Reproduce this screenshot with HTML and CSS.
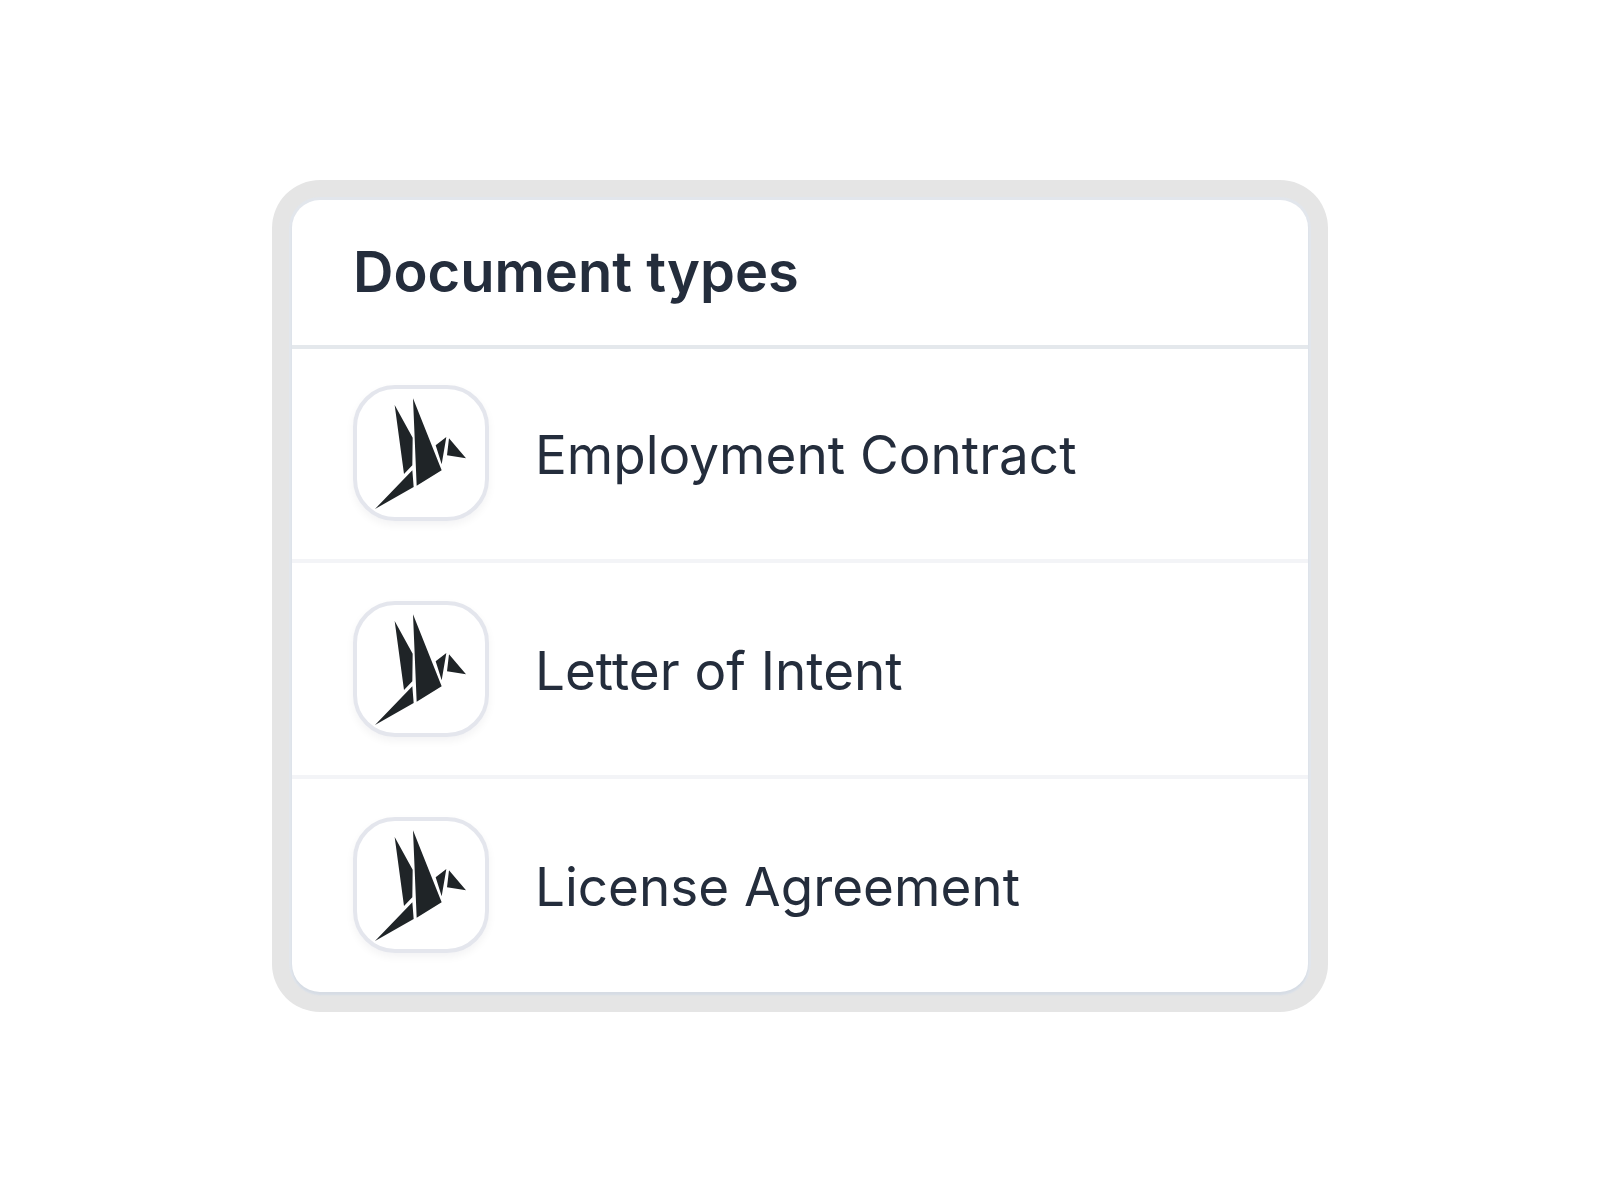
FILE: index.html
```html
<!DOCTYPE html>
<html lang="en">
<head>
<meta charset="utf-8">
<meta name="viewport" content="width=device-width, initial-scale=1">
<title>Document types</title>
<link rel="stylesheet" href="styles.css">
</head>
<body>
<svg class="sprite" aria-hidden="true">
  <symbol id="bird" viewBox="0 0 384 384">
    <path d="M113 48L167 146L166 229L141 255ZM168 28L254 244L179 290ZM268 144L254 226L236 169ZM276 148L327 208L270 199ZM166 244L170 294L54 360Z"/>
  </symbol>
</svg>
<main class="page">
  <section class="card" aria-labelledby="card-title">
    <div class="panel">
      <header class="card-header">
        <h1 class="card-title" id="card-title">Document types</h1>
      </header>
      <ul class="list">
        <li class="row">
          <span class="tile"><svg class="bird" aria-hidden="true"><use href="#bird"/></svg></span>
          <span class="label">Employment Contract</span>
        </li>
        <li class="row">
          <span class="tile"><svg class="bird" aria-hidden="true"><use href="#bird"/></svg></span>
          <span class="label">Letter of Intent</span>
        </li>
        <li class="row">
          <span class="tile"><svg class="bird" aria-hidden="true"><use href="#bird"/></svg></span>
          <span class="label">License Agreement</span>
        </li>
      </ul>
    </div>
  </section>
</main>
</body>
</html>
```
FILE: styles.css
```css
* {
  box-sizing: border-box;
}

body {
  margin: 0;
  background: #fff;
  color: #242d3c;
  font-family: Inter, "Liberation Sans", sans-serif;
  font-optical-sizing: none;
  font-variant-ligatures: none;
}

.sprite {
  display: none;
}

.page {
  min-height: 100vh;
  display: flex;
  flex-direction: column;
  align-items: center;
  padding: 180px 0;
}

.card {
  width: 66%;
  min-width: 720px;
  padding: 20px;
  border-radius: 48px;
  background: #e5e5e5;
}

.panel {
  border-radius: 28px;
  background: #fff;
  box-shadow: 0 3px 2px #d6dce4, 0 0 0 3px #e2e6ec;
}

.card-header {
  padding: 36px 61px 37px;
  border-bottom: 4px solid #e4e8ec;
}

.card-title {
  margin: 0;
  font-size: 56px;
  line-height: 72px;
  font-weight: 600;
}

.list {
  margin: 0;
  padding: 0;
  list-style: none;
}

.row {
  display: flex;
  align-items: center;
  gap: 46px;
  padding: 38px 61px;
}

.row:first-child {
  padding-top: 36px;
}

.row:last-child {
  padding-bottom: 39px;
}

.row + .row {
  border-top: 4px solid #f3f4f7;
}

.tile {
  flex: none;
  width: 136px;
  height: 136px;
  border: 4px solid #e4e6ed;
  border-radius: 42px;
  background: #fff;
  box-shadow: 0 4px 8px rgba(20, 20, 30, 0.05);
}

.bird {
  display: block;
  width: 128px;
  height: 128px;
  fill: #1f2427;
}

.label {
  padding-top: 4px;
  font-size: 53px;
  line-height: 64px;
}
```
